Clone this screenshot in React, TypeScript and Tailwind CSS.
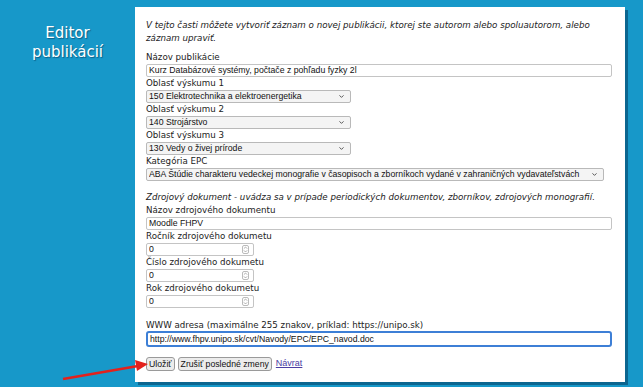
import { ChevronDown } from "lucide-react";

const label = "block h-[12px] text-[8.7px] leading-[12px] text-[#222]";
const field =
  "block h-[13px] rounded-[2px] border border-[#c4c4c4] bg-white px-[2px] font-['Liberation_Sans',Arial,sans-serif] text-[8.7px] leading-[11px] text-[#111] outline-none";

function Select({ value, width }: { value: string; width: string }) {
  return (
    <div className={`relative h-[13px] ${width}`}>
      <select
        className="block h-[13px] w-full appearance-none rounded-[2px] border border-[#b9b9b9] bg-[#f4f4f4] px-[2px] font-['Liberation_Sans',Arial,sans-serif] text-[8.7px] leading-[11px] text-[#111] outline-none"
        defaultValue={value}
      >
        <option>{value}</option>
      </select>
      <ChevronDown className="pointer-events-none absolute right-[6px] top-[3px] h-[7px] w-[7px] text-[#444]" strokeWidth={3} />
    </div>
  );
}

function NumberField({ value }: { value: string }) {
  return (
    <div className="relative h-[13px] w-[108px]">
      <input className={`${field} w-full`} defaultValue={value} readOnly />
      <span className="pointer-events-none absolute right-[5px] top-[2px] flex h-[9px] w-[7px] items-center justify-center rounded-[2px] border border-[#bbb]">
        <svg viewBox="0 0 6 8" className="h-[7px] w-[5px]">
          <path d="M1 3 L3 1 L5 3 M1 5 L3 7 L5 5" fill="none" stroke="#888" strokeWidth="0.8" />
        </svg>
      </span>
    </div>
  );
}

function Btn({ children }: { children: React.ReactNode }) {
  return (
    <button className="h-[14px] rounded-[3px] border border-[#9a9a9a] bg-[#ececec] px-[2px] font-['Liberation_Sans',Arial,sans-serif] text-[8.7px] leading-[12px] text-[#111]">
      {children}
    </button>
  );
}

export default function App() {
  return (
    <div className="relative flex h-[387px] w-[643px] overflow-hidden bg-[#1798c9] font-['DejaVu_Sans',Verdana,sans-serif]">
      <div className="w-[135px] pt-[24px] text-center text-[15px] leading-[19px] text-white [text-shadow:1px_1px_1px_rgba(0,40,70,0.5)]">
        <div>Editor</div>
        <div>publikácií</div>
      </div>

      <div className="mt-[7px] h-[375px] w-[490px] bg-white pl-[11px] pr-[13px] pt-[12px] shadow-[3px_3px_0_0_#0c6690]">
        <p className="text-[8.7px] italic leading-[13px] text-[#222]">
          V tejto časti môžete vytvoriť záznam o novej publikácii, ktorej ste autorom alebo spoluautorom, alebo
          <br />
          záznam upraviť.
        </p>

        <div className="mt-[6px] flex flex-col gap-y-[0.5px]">
          <label className={label}>Názov publikácie</label>
          <input className={`${field} w-[466px]`} defaultValue="Kurz Databázové systémy, počtače z pohľadu fyzky 2l" readOnly />

          <label className={label}>Oblasť výskumu 1</label>
          <Select value="150 Elektrotechnika a elektroenergetika" width="w-[205px]" />

          <label className={label}>Oblasť výskumu 2</label>
          <Select value="140 Strojárstvo" width="w-[205px]" />

          <label className={label}>Oblasť výskumu 3</label>
          <Select value="130 Vedy o živej prírode" width="w-[205px]" />

          <label className={label}>Kategória EPC</label>
          <Select
            value="ABA Štúdie charakteru vedeckej monografie v časopisoch a zborníkoch vydané v zahraničných vydavateľstvách"
            width="w-[458px]"
          />
        </div>

        <div className="mt-[10px] flex flex-col gap-y-[0.5px]">
          <p className="h-[13px] text-[8.7px] italic leading-[13px] text-[#222]">
            Zdrojový dokument - uvádza sa v prípade periodických dokumentov, zborníkov, zdrojových monografií.
          </p>
          <label className={label}>Názov zdrojového dokumentu</label>
          <input className={`${field} w-[466px]`} defaultValue="Moodle FHPV" readOnly />

          <label className={label}>Ročník zdrojového dokumetu</label>
          <NumberField value="0" />

          <label className={label}>Číslo zdrojového dokumetu</label>
          <NumberField value="0" />

          <label className={label}>Rok zdrojového dokumetu</label>
          <NumberField value="0" />
        </div>

        <div className="mt-[11px] flex flex-col">
          <label className={label}>WWW adresa (maximálne 255 znakov, príklad: https://unipo.sk)</label>
          <input
            className="block h-[16px] w-[466px] rounded-[3px] border-2 border-[#3d7fd6] bg-white px-[2px] font-['Liberation_Sans',Arial,sans-serif] text-[8.7px] leading-[12px] text-[#111] outline-none"
            defaultValue="http://www.fhpv.unipo.sk/cvt/Navody/EPC/EPC_navod.doc"
            readOnly
          />
        </div>

        <div className="mt-[10px] flex items-center gap-[3px]">
          <Btn>Uložiť</Btn>
          <Btn>Zrušiť posledné zmeny</Btn>
          <a href="#" className="ml-[1px] font-['Liberation_Sans',Arial,sans-serif] text-[9px] text-[#4b3ea3] underline">
            Návrat
          </a>
        </div>
      </div>

      <svg className="pointer-events-none absolute left-0 top-0" width="643" height="387">
        <line x1="63" y1="379" x2="138" y2="366" stroke="#e3211c" strokeWidth="2.5" />
        <polygon points="148,364 135,360 137,371" fill="#e3211c" />
      </svg>
    </div>
  );
}
